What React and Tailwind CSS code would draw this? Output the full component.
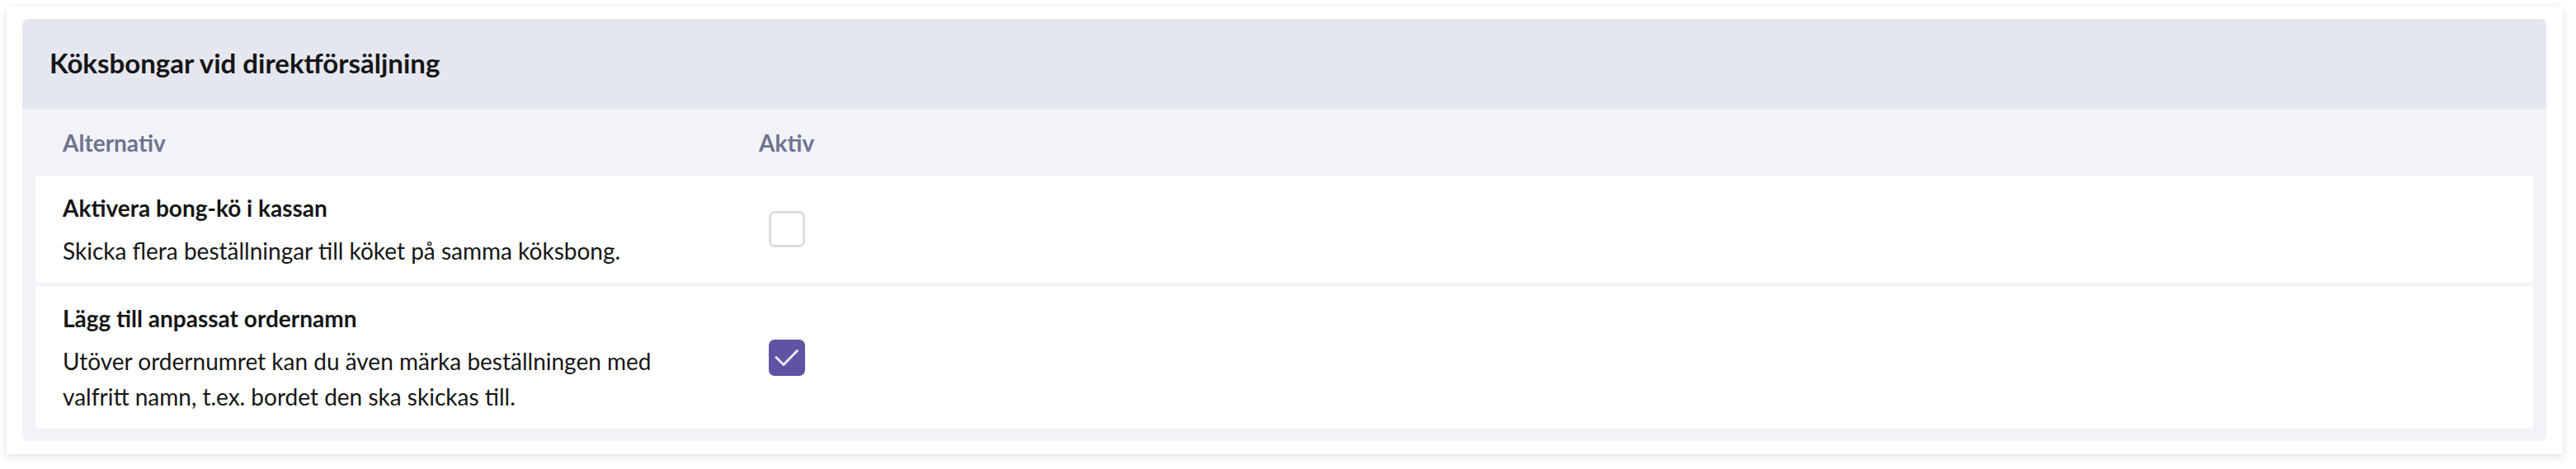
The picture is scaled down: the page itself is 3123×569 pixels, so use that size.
import React from 'react';

const options = [
  {
    id: 'queue',
    title: 'Aktivera bong-kö i kassan',
    description: 'Skicka flera beställningar till köket på samma köksbong.',
    active: false,
  },
  {
    id: 'ordername',
    title: 'Lägg till anpassat ordernamn',
    description: 'Utöver ordernumret kan du även märka beställningen med valfritt namn, t.ex. bordet den ska skickas till.',
    active: true,
  },
];

function Checkbox({ checked }) {
  if (checked) {
    return (
      <span className="flex h-[44px] w-[44px] items-center justify-center rounded-[7px] bg-[#5f54a3]">
        <svg viewBox="0 0 44 44" className="h-[44px] w-[44px]" fill="none">
          <path d="M9 21.5 L18 30.5 L34.5 13.5" stroke="#eceaf5" strokeWidth="3" strokeLinecap="round" strokeLinejoin="round" />
        </svg>
      </span>
    );
  }
  return <span className="block h-[44px] w-[44px] rounded-[7px] border-[3px] border-[#dcdcdc] bg-white" />;
}

export default function App() {
  return (
    <div className="min-h-screen bg-white pl-[8px] pr-[16px] pt-[8px] pb-[17px] font-['Lato','Noto_Sans',sans-serif]">
      <div className="bg-white pl-[19px] pr-[20px] pt-[15px] pb-[16px] shadow-[0_3px_10px_rgba(0,0,0,0.12)]">
        <div className="overflow-hidden rounded-[7px] bg-[#f2f3f7]">
          {/* Title bar */}
          <div className="bg-[#e5e7f0] pl-[33px] pt-[29px] pb-[32px]">
            <h2 className="text-[33px] font-bold leading-[48px] text-[#161616]">Köksbongar vid direktförsäljning</h2>
          </div>

          {/* Column headers */}
          <div className="mx-[16px] grid grid-cols-[877px_1fr] pt-[20px] pb-[18px] text-[28px] font-bold leading-[43px] text-[#6e7391]">
            <div className="pl-[33px]">Alternativ</div>
            <div>Aktiv</div>
          </div>

          {/* Rows */}
          <div className="flex flex-col gap-[4px] px-[16px] pb-[15px]">
            {options.map(opt => (
              <div key={opt.id} className="grid grid-cols-[877px_1fr] items-center bg-white">
                <div className="pl-[33px] pr-[60px] pt-[18px] pb-[17px] text-[#161616]">
                  <p className="text-[28px] font-bold leading-[43px]">{opt.title}</p>
                  <p className="mt-[9px] text-[28px] leading-[43px]">{opt.description}</p>
                </div>
                <div className="pl-[12px]">
                  <Checkbox checked={opt.active} />
                </div>
              </div>
            ))}
          </div>
        </div>
      </div>
    </div>
  );
}
